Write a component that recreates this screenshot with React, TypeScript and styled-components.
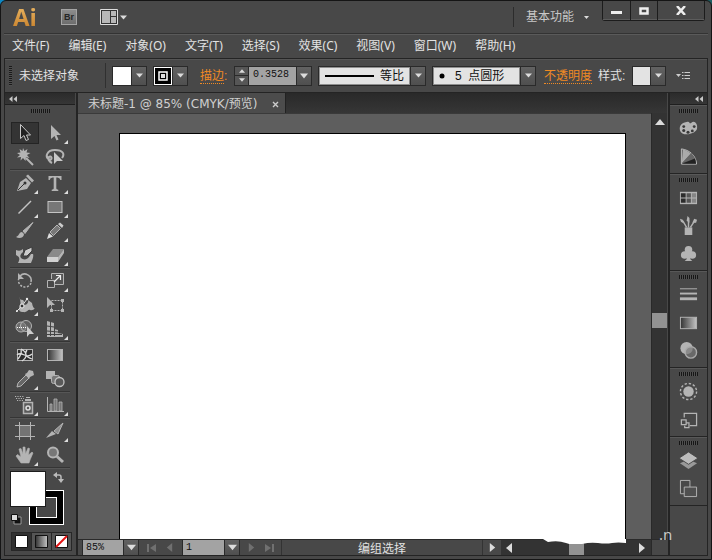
import React, { useState } from "react";
import styled, { createGlobalStyle, css } from "styled-components";

const c = {
  panel: "#484848",
  edge: "#242424",
  dark: "#333333",
  icon: "#b4b4b4",
  text: "#e2e2e2",
  orange: "#f08a24",
};

const Global = createGlobalStyle`
  * { box-sizing: border-box; }
  html, body { margin: 0; height: 100%; }
  body {
    background: linear-gradient(90deg, #0d87c4 0 10px, #1d5f63 10px);
    color: ${c.text};
    font: 12px/16px "Noto Sans", "Noto Sans CJK SC", sans-serif;
    overflow: hidden;
  }
  button, input, select {
    font: inherit; color: inherit; margin: 0; padding: 0; border: 0; border-radius: 0; background: none;
  }
  input, select { min-width: 0; outline: none; }
  svg { display: block; flex: none; }
`;

const Window = styled.div`
  height: 100vh;
  display: flex;
  flex-direction: column;
  background: ${c.panel};
  border: 1px solid #151515;
  border-radius: 6px 6px 0 0;
  padding: 0 3px 3px;
`;

/* Title bar */
const TitleBar = styled.header`
  height: 32px;
  flex: none;
  display: flex;
  align-items: center;
  padding-left: 9px;
`;
const Logo = styled.span`
  width: 48px;
  font: bold 24px/24px "Liberation Sans Narrow", "Open Sans", sans-serif;
  background: linear-gradient(#eab765, #c8812b);
  background-clip: text;
  color: transparent;
`;
const Bridge = styled.button`
  width: 16px;
  height: 16px;
  background: linear-gradient(#8c8c8c, #6d6d6d);
  border: 1px solid #a4a4a4;
  color: #262626;
  font: bold 9px/12px "Liberation Sans", sans-serif;
  margin-right: 23px;
`;
const PlainButton = styled.button`
  display: flex;
  align-items: center;
  gap: 2px;
`;
const Workspace = styled.button`
  display: flex;
  align-items: center;
  gap: 10px;
  height: 20px;
  margin-left: auto;
  margin-right: 13px;
  padding-left: 12px;
  border-left: 1px solid #2c2c2c;
  color: #c8c8c8;
`;
const WindowButtons = styled.div`
  align-self: flex-start;
  display: flex;
  height: 20px;
  margin-right: 3px;
  border: 1px solid #1c1c1c;
  border-top: 0;
  border-radius: 0 0 3px 3px;
`;
const WindowButton = styled.button<{ $wide?: boolean }>`
  width: ${(p) => (p.$wide ? 47 : 27)}px;
  display: grid;
  place-items: center;
  box-shadow: inset 0 -1px #5c5c5c;
  & + & { border-left: 1px solid #1c1c1c; }
`;

/* Menu bar */
const MenuBar = styled.nav`
  height: 25px;
  flex: none;
  display: flex;
  align-items: center;
  gap: 19px;
  padding-left: 8px;
  border-top: 1px solid #333;
  box-shadow: inset 0 1px #5a5a5a;
`;
const MenuItem = styled.button`
  white-space: nowrap;
  line-height: 20px;
`;

/* Control bar */
const ControlBar = styled.section`
  height: 35px;
  flex: none;
  display: flex;
  align-items: center;
  gap: 6px;
  padding-left: 4px;
  border: 1px solid ${c.edge};
  box-shadow: inset 0 1px #555;
  font-family: "Liberation Sans", "Noto Sans CJK SC", sans-serif;
`;
const SideGrip = styled.span`
  width: 4px;
  height: 20px;
  border-right: 1px solid ${c.panel};
  background: repeating-linear-gradient(#1a1a1a 0 1px, #505050 1px 2px);
`;
const Label = styled.span<{ $w: number }>`
  width: ${(p) => p.$w}px;
  white-space: nowrap;
`;
const Divider = styled.span`
  width: 1px;
  height: 25px;
  background: #303030;
`;
const Links = styled.span<{ $w: number; $pad: number }>`
  width: ${(p) => p.$w}px;
  padding-left: ${(p) => p.$pad}px;
  color: ${c.orange};
  white-space: nowrap;
  a { color: inherit; text-decoration: none; border-bottom: 1px dotted ${c.orange}; }
`;
const Combo = styled.div<{ $w: number }>`
  width: ${(p) => p.$w}px;
  height: 20px;
  display: flex;
  align-items: stretch;
  border: 1px solid #2a2a2a;
  background: #565656;
`;
const Swatch = styled.span<{ $tone: string }>`
  flex: 1;
  display: grid;
  place-items: center;
  border: 1px solid ${(p) => (p.$tone === "#000" ? "#fff" : p.$tone)};
  background: ${(p) => p.$tone};
`;
const Arrow = styled.button`
  width: 15px;
  flex: none;
  display: grid;
  place-items: center;
  border-left: 1px solid #2a2a2a;
  background: linear-gradient(#626262, #4f4f4f);
`;
const ArrowMark = styled(Arrow).attrs({ as: "span" })``;
const Spinner = styled.div`
  width: 14px;
  display: flex;
  flex-direction: column;
  border-right: 1px solid #2a2a2a;
  button { flex: 1; display: grid; place-items: center; }
  button + button { border-top: 1px solid #2a2a2a; }
`;
const NumberInput = styled.input`
  flex: 1;
  width: 0;
  background: #a3a3a3;
  color: #111;
  padding: 0 0 2px 4px;
  font: 10px/16px "Liberation Mono", monospace;
`;
const Face = styled.label`
  flex: 1;
  display: flex;
  align-items: center;
  border: 1px solid #8e8e8e;
  background: #e3e3e3;
  color: #111;
  padding-left: 5px;
`;
const Select = styled.select<{ $pad: number }>`
  appearance: none;
  flex: 1;
  height: 16px;
  padding-left: ${(p) => p.$pad}px;
  white-space: pre;
`;

/* Workspace columns */
const Body = styled.div`
  flex: 1;
  min-height: 0;
  display: flex;
  border: 1px solid ${c.edge};
  border-top: 0;
`;
const Column = styled.aside<{ $w: number }>`
  width: ${(p) => p.$w}px;
  flex: none;
  display: flex;
  flex-direction: column;
`;
const ColumnHead = styled.button<{ $right?: boolean }>`
  height: 12px;
  flex: none;
  display: flex;
  align-items: center;
  justify-content: ${(p) => (p.$right ? "flex-end" : "flex-start")};
  padding: 0 4px;
  background: linear-gradient(#2b2b2b, #363636);
  border-bottom: 1px solid #1f1f1f;
`;
const Grip = styled.span`
  display: block;
  flex: none;
  width: 19px;
  height: 4px;
  margin: 4px auto 0;
  background: repeating-linear-gradient(90deg, #161616 0 1px, #505050 1px 2px);
`;
const ToolGroups = styled.div`
  padding: 8px 5px 0;
`;
const ToolGroup = styled.div`
  display: grid;
  grid-template-columns: 30px 30px;
  grid-auto-rows: 24px;
  border-bottom: 1px solid #353535;
  box-shadow: 0 1px #565656;
  margin-bottom: 1px;
`;
const Tool = styled.button<{ $on: boolean }>`
  position: relative;
  display: grid;
  place-items: center;
  margin: 1px;
  ${(p) => p.$on && css`background: #343434; box-shadow: inset 0 0 0 1px #242424;`}
`;
const Flyout = styled.i`
  position: absolute;
  right: 1px;
  bottom: 0;
  border: 2px solid transparent;
  border-right-color: #ddd;
  border-bottom-color: #ddd;
`;
const Paint = styled.div`
  position: relative;
  height: 63px;
  margin: 0 5px;
`;
const FillSwatch = styled.button`
  position: absolute;
  left: 0;
  top: 2px;
  width: 36px;
  height: 36px;
  background: #fff;
  border: 1px solid #1d1d1d;
`;
const StrokeSwatch = styled.button`
  position: absolute;
  left: 19px;
  top: 21px;
  width: 35px;
  height: 35px;
  border: 1px solid #fff;
  background: #000;
  display: grid;
  place-items: center;
  &::after { content: ""; width: 19px; height: 19px; border: 1px solid #fff; background: ${c.panel}; }
`;
const PaintAction = styled.button<{ $x: number; $y: number }>`
  position: absolute;
  left: ${(p) => p.$x}px;
  top: ${(p) => p.$y}px;
`;
const PaintModes = styled.div`
  display: flex;
  width: 61px;
  height: 19px;
  margin-left: 6px;
  border: 1px solid #272727;
`;
const PaintMode = styled.button<{ $on?: boolean }>`
  flex: 1;
  display: grid;
  place-items: center;
  background: ${(p) => (p.$on ? "#303030" : "#555")};
  & + & { border-left: 1px solid #272727; }
`;
const Center = styled.main`
  flex: 1;
  min-width: 0;
  display: flex;
  flex-direction: column;
  margin: 0 1px;
  border-left: 2px solid ${c.edge};
`;
const Tabs = styled.div`
  height: 20px;
  flex: none;
  display: flex;
  background: linear-gradient(#292929, #363636);
`;
const Tab = styled.div`
  width: 208px;
  display: flex;
  align-items: center;
  justify-content: space-between;
  padding: 2px 6px 0 10px;
  background: #4c4c4c;
  border-right: 1px solid #222;
  color: #d0d0d0;
  font-family: "DejaVu Sans", "Noto Sans CJK SC", sans-serif;
  white-space: nowrap;
`;
const View = styled.div`
  flex: 1;
  min-height: 0;
  display: flex;
`;
const Canvas = styled.div`
  flex: 1;
  background: #5e5e5e;
  border-top: 1px solid #3a3a3a;
  padding: 19px 25px 0 41px;
  display: flex;
`;
const Artboard = styled.div`
  flex: 1;
  background: #fff;
  border: 1px solid #000;
  border-bottom: 0;
`;
const VScroll = styled.div`
  width: 16px;
  flex: none;
  display: flex;
  flex-direction: column;
  align-items: center;
  padding-top: 4px;
  background: ${c.dark};
  border-left: 1px solid #292929;
`;
const Space = styled.span<{ $grow: number }>`
  flex: ${(p) => p.$grow};
`;
const Thumb = styled.span`
  width: 15px;
  height: 15px;
  background: #929292;
  flex: none;
`;
const StatusBar = styled.footer`
  height: 16px;
  flex: none;
  display: flex;
  align-items: stretch;
  border-top: 1px solid #2a2a2a;
  padding-left: 4px;
  font-family: "Liberation Sans", "Noto Sans CJK SC", sans-serif;
`;
const StatusField = styled(Combo)`
  height: 15px;
  flex: none;
  border-width: 0 1px;
  input { padding: 0 0 0 3px; height: 15px; }
`;
const NavPair = styled.div<{ $w: number }>`
  width: ${(p) => p.$w}px;
  flex: none;
  display: flex;
  align-items: center;
  justify-content: center;
  gap: 9px;
`;
const StatusText = styled.div`
  flex: 1;
  border-left: 1px solid #333;
  text-align: center;
  line-height: 18px;
`;
const StatusMore = styled.button`
  width: 19px;
  display: grid;
  place-items: center;
  border-left: 1px solid #333;
`;
const HScroll = styled.div`
  position: relative;
  width: 150px;
  display: flex;
  align-items: center;
  padding: 0 4px 0 3px;
  background: ${c.dark};
`;
const Corner = styled.span`
  width: 16px;
  border-left: 1px solid #292929;
`;
const Tear = styled.svg`
  position: absolute;
  left: 42px;
  top: -1px;
`;
const Mark = styled.span`
  position: absolute;
  left: 158px;
  top: -14px;
  color: #c9c9c9;
  font: 15px/16px "Noto Sans", sans-serif;
`;
const Dock = styled(Column)`
  border-left: 2px solid ${c.edge};
`;
const DockGroup = styled.div`
  border-bottom: 1px solid ${c.edge};
  box-shadow: inset 0 1px #585858;
  padding: 0 0 3px;
`;
const DockButton = styled.button`
  width: 100%;
  height: 28px;
  display: grid;
  place-items: center;
  ${Grip} + & { margin-top: 1px; }
`;

const Tri = ({ d = "down", s = 7, f = "#dcdcdc" }: { d?: string; s?: number; f?: string }) => {
  const pts: Record<string, string> = {
    down: "0,2 10,2 5,8", up: "0,8 10,8 5,2", left: "8,0 8,10 2,5", right: "2,0 2,10 8,5",
  };
  return <svg width={s} height={s} viewBox="0 0 10 10"><polygon points={pts[d]} fill={f} /></svg>;
};

const Chevrons = () => (
  <svg width="8" height="6" viewBox="0 0 8 6" fill="#c8c8c8"><path d="M3.500 0v6L0 3zM8 0v6L4.500 3z" /></svg>
);

const I = c.icon;
const toolArt: Record<string, React.ReactNode> = {
  select: <path d="M5.500 1.500v14l3.500-3 2 5 2.500-1-2-4.500h4z" fill="#222" stroke="#c8c8c8" />,
  direct: <path d="M6 2v14l3.500-3 2 4.500 2-1-2-4.500h4.500z" fill={I} />,
  wand: <><path d="M8 1l1.500 3 3-2-1 3.500 4 .5-3.500 2 2.500 3-3.500-1-.5 4-2.500-3-2.500 2.500.5-3.500-4 .5 3-2.500-3-2 3.500-.5-1-3.500 3 2z" fill={I} /><path d="M11 11l7 7" stroke={I} strokeWidth="2" /></>,
  lasso: <><path d="M5 13C-1 10 2 3 10 3s10 4 7 8M5 13c3-1 1-5-1-3s1 5 3 6" fill="none" stroke={I} strokeWidth="2" /><path d="M9 5v12l3-3h6z" fill="#c8c8c8" /></>,
  pen: <><path d="M2 18l3-9 6-4 5 5-4 6z" fill={I} /><path d="M11 3l2-1.500 6 6-2 2z" fill={I} /><path d="M3 17l6-6" stroke="#333" /><circle cx="10" cy="10" r="1.500" fill="#333" /></>,
  type: <path d="M3.500 3h13v4h-1.200q-.3-2.500-3-2.500h-1v11q0 1 2 1.200V18H6.700v-1.300q2-.2 2-1.200v-11h-1q-2.700 0-3 2.500H3.500z" fill={I} />,
  line: <path d="M3.500 16.500L16 4" stroke="#c4c4c4" strokeWidth="1.500" />,
  rect: <rect x="3" y="4.500" width="14" height="11" fill="#777" stroke="#c4c4c4" />,
  brush: <><path d="M18 1.500L8 10l2 2.500z" fill={I} stroke={I} /><path d="M7 11c-3 0-2 3-6 5 3 2 8 1 8-3z" fill={I} /></>,
  pencil: <><path d="M2 18l2-6 4 3.500z" fill="#ddd" /><path d="M5 11l7-7 3.500 3.500-7 7z" fill="#777" stroke={I} /><path d="M13 3l2-1.500 3.500 3L17 7z" fill="#ccc" /></>,
  blob: <><path d="M1 5q4 2 7-1v3q-4 3-2 6c2 2 6 2 8-1l2-3h2c1 3-1 6-2 9H3c2-4 2-6-2-8z" fill={I} /><path d="M8 11l2-6 7-3v4l-5 5z" fill="#ccc" stroke="#3a3a3a" /></>,
  eraser: <><path d="M2 12l6-8h11l-6 8z" fill="#8a8a8a" /><path d="M2 12h11v5H2z" fill="#d1d1d1" /><path d="M13 12l6-8v4l-6 9z" fill={I} /></>,
  rotate: <><path d="M5 5a6.500 6.500 0 0 1 11 6" fill="none" stroke={I} strokeWidth="1.500" /><path d="M16 12a6.500 6.500 0 1 1-12-5" fill="none" stroke={I} strokeWidth="1.500" strokeDasharray="2 1.500" /><path d="M3 2v6h6z" fill={I} /></>,
  scale: <><path d="M6.500 8V2.500h12v11H10" fill="#555" stroke={I} /><path d="M2.500 9.500h7v7h-7z" fill="none" stroke={I} /><path d="M9 11l6-6m-4-.5h4.500V9" fill="none" stroke="#eee" strokeWidth="1.200" /></>,
  width: <><path d="M4 2q0 3 4 3 2 2 0 4c2 2 6 0 5-4l4 3q1 6 3 5-2 3-5 2c-2-1-3 3-7 2-3 0-4-1-4-4q3-5 0-11z" fill={I} /><path d="M1 17l6-6 5-7" stroke="#ddd" fill="none" /><circle cx="7" cy="11" r="2" fill="#333" stroke="#eee" /><circle cx="2" cy="16" r="1" fill="#eee" /><circle cx="12" cy="4" r="1.200" fill="#eee" /></>,
  transform: <><path d="M2 2v11l3-3h5z" fill={I} /><rect x="6.500" y="5.500" width="11" height="10" fill="none" stroke={I} strokeDasharray="2 1" /><path d="M5 14h3v3H5zM16 4h3v3h-3zM16 14h3v3h-3z" fill={I} /></>,
  shape: <><circle cx="6" cy="8" r="5" fill="#6d6d6d" stroke={I} /><circle cx="11" cy="7" r="5.500" fill="#777" fillOpacity=".5" stroke={I} /><path d="M2 8.500h12" stroke="#fff" strokeDasharray="1 1" /><path d="M12 7v11l2.500-3H19z" fill="#ccc" /></>,
  perspective: <><path d="M2 2l7 2v6l4 1v3l5 1v3H2z" fill={I} /><path d="M5.500 2v15M2 7l7 1M2 12l11 1M2 15.500h15M9.500 8v9" stroke="#444" fill="none" /></>,
  mesh: <><rect x="2.500" y="4.500" width="15" height="11" fill="#2e2e2e" stroke={I} /><path d="M6 4c6 3 7 8 1 12M2 10c5-5 9 5 15-1M3 14c3-4 4-6 3-9M17 14c-6-2-8-5-5-9" stroke="#ddd" fill="none" strokeWidth="1.300" /></>,
  gradient: <rect x="2.500" y="4.500" width="15" height="11" fill="url(#lr)" stroke={I} />,
  dropper: <><path d="M2 18l1-4 8-8 3 3-8 8z" fill="#666" stroke={I} /><path d="M10 5l2-1 2-3 4 1 1 4-4 2-1 2z" fill={I} /></>,
  blend: <><path d="M1 2h9v8H1z" fill={I} /><rect x="6.500" y="6.500" width="8" height="8" rx="2" fill="#777" stroke={I} /><circle cx="14.500" cy="13" r="4.500" fill="#5a5a5a" stroke="#c4c4c4" strokeWidth="1.300" /></>,
  spray: <><path d="M8.500 7.500h9v11h-9z" fill="#5b5b5b" stroke={I} strokeWidth="1.500" /><circle cx="13" cy="13" r="2" fill="none" stroke="#ddd" strokeWidth="1.500" /><path d="M10 6h6V4h-6zM11 2h4v1h-4z" fill={I} /><path d="M0 1.500h9M1 3.500h8M2 5.500h6" stroke={I} strokeDasharray="1.200 1.200" /></>,
  graph: <><path d="M2.500 2v14.500H19" fill="none" stroke={I} /><path d="M5 9h2v7H5zM9 4h3v12H9zM14 7h3v9h-3z" fill="#777" stroke={I} strokeWidth=".8" /></>,
  artboard: <><rect x="5" y="5" width="10" height="10" fill="#737373" /><path d="M4.500 1v18M15.500 1v18M0 4.500h20M0 15.500h20" stroke={I} /></>,
  slice: <><path d="M1 17l6-7 4 3z" fill={I} /><path d="M9 10l9-8-5 11z" fill="#8d8d8d" stroke={I} /></>,
  hand: <path d="M6 18l-5-7 1.500-1.500L6 12 4 4l2-.5L8 9V2h2l.5 7L13 3l1.500.5-1 6.500L17 7l1 1-3 7-1 3z" fill={I} stroke={I} strokeWidth=".6" />,
  zoom: <><circle cx="8" cy="7.500" r="5" fill="#777" stroke={I} strokeWidth="2" /><path d="M12 11.500l6 5.500" stroke={I} strokeWidth="3" /></>,
};

const toolGroups: { id: string; name: string; fly?: boolean }[][] = [
  [{ id: "select", name: "选择" }, { id: "direct", name: "直接选择", fly: true }, { id: "wand", name: "魔棒" }, { id: "lasso", name: "套索" }],
  [{ id: "pen", name: "钢笔", fly: true }, { id: "type", name: "文字", fly: true }, { id: "line", name: "直线段", fly: true }, { id: "rect", name: "矩形", fly: true },
    { id: "brush", name: "画笔" }, { id: "pencil", name: "铅笔", fly: true }, { id: "blob", name: "斑点画笔" }, { id: "eraser", name: "橡皮擦", fly: true }],
  [{ id: "rotate", name: "旋转", fly: true }, { id: "scale", name: "比例缩放", fly: true }, { id: "width", name: "宽度", fly: true }, { id: "transform", name: "自由变换" },
    { id: "shape", name: "形状生成器", fly: true }, { id: "perspective", name: "透视网格", fly: true }],
  [{ id: "mesh", name: "网格" }, { id: "gradient", name: "渐变" }, { id: "dropper", name: "吸管", fly: true }, { id: "blend", name: "混合" }],
  [{ id: "spray", name: "符号喷枪", fly: true }, { id: "graph", name: "柱形图", fly: true }],
  [{ id: "artboard", name: "画板" }, { id: "slice", name: "切片", fly: true }, { id: "hand", name: "抓手", fly: true }, { id: "zoom", name: "缩放" }],
];

const dockArt: { name: string; art: React.ReactNode }[][] = [
  [
    { name: "颜色", art: <><path d="M9 3c2-1 2 3 4 1 3-3 7 1 6 6-1 6-16 9-18 2C0 7 3 4 9 3z" fill={I} /><g fill="#383838"><circle cx="5" cy="8" r="1.500" /><circle cx="5" cy="12" r="1.600" /><circle cx="9.500" cy="14" r="1.600" /><circle cx="14" cy="12.500" r="1.500" /><circle cx="16" cy="8" r="1.500" /></g></> },
    { name: "颜色参考", art: <><path d="M2.500 2v16h16C18 9 11 3 2.500 2z" fill="#555" stroke="#c0c0c0" /><path d="M3 17L4 3c3 0 6 2 9 4z" fill="#aaa" /><path d="M3 17L13 6l4 6z" fill="#666" /><path d="M3 17.500L17 12l1 5.500z" fill="#222" /></> },
  ],
  [
    { name: "色板", art: <><rect x="1" y="4" width="18" height="13" fill={I} /><path d="M2 5.500h5v4.500H2zM2 11h5v4.500H2z" fill="#2c2c2c" /><path d="M8 5.500h4.500v4.500H8zM8 11h4.500v4.500H8z" fill="#555" /><path d="M13.500 5.500H18v4.500h-4.500zM13.500 11H18v4.500h-4.500z" fill="#858585" /></> },
    { name: "画笔", art: <><path d="M6 12h8v8H6z" fill={I} /><path d="M8 12L4 5M10 12V4M12 12l4-6" stroke={I} strokeWidth="1.500" /><path d="M1 3l3 1 1 4-3-2zM9 0l2 2 0 5-3-2zM14 7l2-4 3 1-1 3z" fill={I} /></> },
    { name: "符号", art: <><circle cx="10" cy="6" r="4" fill={I} /><circle cx="6" cy="11.500" r="4" fill={I} /><circle cx="14" cy="11.500" r="4" fill={I} /><path d="M9 9h2l1 7 2 2H6l2-2z" fill={I} /></> },
  ],
  [
    { name: "描边", art: <><path d="M1 4h18" stroke={I} /><path d="M1 9h18" stroke={I} strokeWidth="2" /><path d="M1 14.500h18" stroke={I} strokeWidth="3" /></> },
    { name: "渐变", art: <rect x="1.500" y="4.500" width="17" height="12" fill="url(#lr)" stroke={I} /> },
    { name: "透明度", art: <><circle cx="8" cy="7.500" r="6.500" fill={I} /><circle cx="12.500" cy="12" r="6" fill="#777" fillOpacity=".7" stroke="#aaa" strokeWidth="1.500" /></> },
  ],
  [
    { name: "外观", art: <><circle cx="10" cy="10" r="5.500" fill={I} /><circle cx="10" cy="10" r="8.500" fill="none" stroke={I} strokeWidth="1.500" strokeDasharray="2.500 1.950" /></> },
    { name: "图形样式", art: <path d="M5.500 8V3.500h13v13h-7M2.500 10.500h5v5h-5zM7 13.500h3.500v5H6v-2" fill="none" stroke={I} strokeWidth="1.300" /> },
  ],
  [
    { name: "图层", art: <><path d="M1 13l9-4 9 4-9 6z" fill="#999" /><path d="M0 7.500L10 1l10 6.500L10 14z" fill="#bcbcbc" stroke="#484848" /></> },
    { name: "画板", art: <><path d="M1.500 1.500h10v14h-10z" fill="none" stroke={I} /><path d="M5.500 8.500h13v10h-13z" fill="#505050" stroke={I} /></> },
  ],
];

const menus = ["文件(F)", "编辑(E)", "对象(O)", "文字(T)", "选择(S)", "效果(C)", "视图(V)", "窗口(W)", "帮助(H)"];

export default function App() {
  const [tool, setTool] = useState("select");
  return (
    <Window>
      <Global />
      <svg width="0" height="0" aria-hidden="true">
        <defs><linearGradient id="lr"><stop stopColor="#333" /><stop offset="1" stopColor="#c4c4c4" /></linearGradient></defs>
      </svg>
      <TitleBar>
        <Logo>Ai</Logo>
        <Bridge>Br</Bridge>
        <PlainButton aria-label="排列文档">
          <svg width="18" height="16" viewBox="0 0 18 16"><path d="M.5.500h17v15H.5z" fill="#333" stroke="#ddd" /><path d="M2 2h8v12H2zM11 2h5v5h-5zM11 8h5v6h-5z" fill="#b8b8b8" /></svg>
          <Tri />
        </PlainButton>
        <Workspace>基本功能<Tri s={5} /></Workspace>
        <WindowButtons>
          <WindowButton aria-label="最小化"><svg width="11" height="8"><path d="M0 4h11v3H0z" fill="#eee" /></svg></WindowButton>
          <WindowButton aria-label="最大化"><svg width="10" height="8"><path d="M1.500 1.500h7v5h-7z" fill="none" stroke="#eee" strokeWidth="2.500" /></svg></WindowButton>
          <WindowButton $wide aria-label="关闭"><svg width="10" height="9"><path d="M1 0l8 9M9 0L1 9" stroke="#eee" strokeWidth="2.500" /></svg></WindowButton>
        </WindowButtons>
      </TitleBar>
      <MenuBar>{menus.map((m) => <MenuItem key={m}>{m}</MenuItem>)}</MenuBar>
      <ControlBar>
        <SideGrip />
        <Label $w={80}>未选择对象</Label>
        <Divider />
        <Combo $w={35}><Swatch $tone="#fff" /><Arrow aria-label="填色"><Tri /></Arrow></Combo>
        <Combo $w={35}>
          <Swatch $tone="#000"><svg width="10" height="10"><path d="M1 1h8v8H1z" fill="none" stroke="#fff" strokeWidth="1.500" /><path d="M3 3h4v4H3z" fill="#ddd" /></svg></Swatch>
          <Arrow aria-label="描边颜色"><Tri /></Arrow>
        </Combo>
        <Links $w={34} $pad={6}><a href="#stroke">描边</a>:</Links>
        <Combo $w={78}>
          <Spinner>
            <button aria-label="增加"><Tri d="up" s={6} /></button>
            <button aria-label="减少"><Tri s={6} /></button>
          </Spinner>
          <NumberInput aria-label="描边粗细" defaultValue="0.3528" />
          <Arrow aria-label="粗细列表"><Tri s={8} /></Arrow>
        </Combo>
        <Combo $w={108}>
          <Face>
            <svg width="49" height="2"><path d="M0 1h49" stroke="#000" strokeWidth="2" /></svg>
            <Select $pad={6} aria-label="宽度配置"><option>等比</option></Select>
          </Face>
          <ArrowMark><Tri /></ArrowMark>
        </Combo>
        <Combo $w={104}>
          <Face>
            <svg width="6" height="6"><circle cx="3" cy="3" r="2.500" fill="#000" /></svg>
            <Select $pad={10} aria-label="画笔定义"><option>5&nbsp; 点圆形</option></Select>
          </Face>
          <ArrowMark><Tri /></ArrowMark>
        </Combo>
        <Links $w={50} $pad={2}><a href="#opacity">不透明度</a></Links>
        <Label $w={28}>样式:</Label>
        <Combo $w={34}><Swatch $tone="#e3e3e3" /><Arrow aria-label="样式列表"><Tri /></Arrow></Combo>
        <PlainButton aria-label="面板菜单">
          <svg width="20" height="10"><path d="M4 3h5L6.500 6z" fill="#ccc" /><path d="M10 1.500h1.500m1 0H18M10 4.500h1.500m1 0H18M10 7.500h1.500m1 0H18" stroke="#ccc" /></svg>
        </PlainButton>
      </ControlBar>
      <Body>
        <Column $w={70}>
          <ColumnHead aria-label="折叠工具"><Chevrons /></ColumnHead>
          <Grip />
          <ToolGroups>
            {toolGroups.map((g, n) => (
              <ToolGroup key={n}>
                {g.map((t) => (
                  <Tool key={t.id} $on={t.id === tool} aria-label={t.name} onClick={() => setTool(t.id)}>
                    <svg width="20" height="20" viewBox="0 0 20 20">{toolArt[t.id]}</svg>
                    {t.fly && <Flyout />}
                  </Tool>
                ))}
              </ToolGroup>
            ))}
          </ToolGroups>
          <Paint>
            <StrokeSwatch aria-label="描边" />
            <FillSwatch aria-label="填色" />
            <PaintAction $x={43} $y={3} aria-label="互换填色和描边">
              <svg width="11" height="11"><path d="M3 3h3q2 0 2 2v3" fill="none" stroke="#bbb" strokeWidth="1.500" /><path d="M0 3l4-3v6zM5 7h6l-3 4z" fill="#bbb" /></svg>
            </PaintAction>
            <PaintAction $x={0} $y={44} aria-label="默认填色和描边">
              <svg width="12" height="12"><path d="M4 4h7v7H4z" fill="#111" stroke="#999" /><path d="M1.500 1.500h6v6h-6z" fill="#ddd" stroke="#111" /></svg>
            </PaintAction>
          </Paint>
          <PaintModes>
            <PaintMode $on aria-label="颜色"><svg width="13" height="13"><path d="M.5.500h12v12H.5z" fill="#fff" stroke="#111" /></svg></PaintMode>
            <PaintMode aria-label="渐变"><svg width="13" height="13"><path d="M.5.500h12v12H.5z" fill="url(#lr)" stroke="#111" /></svg></PaintMode>
            <PaintMode aria-label="无"><svg width="13" height="13"><path d="M.5.500h12v12H.5z" fill="#fff" stroke="#111" /><path d="M1 12L12 1" stroke="#e51616" strokeWidth="2" /></svg></PaintMode>
          </PaintModes>
        </Column>
        <Center>
          <Tabs>
            <Tab>未标题-1 @ 85% (CMYK/预览)
              <PlainButton aria-label="关闭文档"><svg width="7" height="7"><path d="M1 1l5 5M6 1L1 6" stroke="#ccc" strokeWidth="1.400" /></svg></PlainButton>
            </Tab>
          </Tabs>
          <View>
            <Canvas><Artboard /></Canvas>
            <VScroll><Tri d="up" s={10} /><Space $grow={186} /><Thumb /><Space $grow={210} /></VScroll>
          </View>
          <StatusBar>
            <StatusField $w={57}><NumberInput aria-label="缩放比例" defaultValue="85%" /><Arrow aria-label="缩放列表"><Tri s={9} /></Arrow></StatusField>
            <NavPair $w={43}>
              <PlainButton aria-label="首个画板"><svg width="9" height="8" fill="#707070"><path d="M0 0h2v8H0zM9 0v8L3 4z" /></svg></PlainButton>
              <PlainButton aria-label="上一画板"><Tri d="left" s={9} f="#707070" /></PlainButton>
            </NavPair>
            <StatusField $w={58}><NumberInput aria-label="画板" defaultValue="1" /><Arrow aria-label="画板列表"><Tri s={9} /></Arrow></StatusField>
            <NavPair $w={41}>
              <PlainButton aria-label="下一画板"><Tri d="right" s={9} f="#707070" /></PlainButton>
              <PlainButton aria-label="末个画板"><svg width="9" height="8" fill="#707070"><path d="M7 0h2v8H7zM0 0v8l6-4z" /></svg></PlainButton>
            </NavPair>
            <StatusText>编组选择</StatusText>
            <StatusMore aria-label="状态选项"><Tri d="right" s={9} /></StatusMore>
            <HScroll>
              <Tri d="left" s={10} /><Space $grow={54} /><Thumb /><Space $grow={53} /><Tri d="right" s={10} />
              <Tear width="83" height="5" viewBox="0 0 83 5"><path d="M0 0h83v4q-8-1-14 0t-14 0-16 1-16-1T5 3z" fill="#fff" /></Tear>
              <Mark>.n</Mark>
            </HScroll>
            <Corner />
          </StatusBar>
        </Center>
        <Dock $w={39}>
          <ColumnHead $right aria-label="展开面板"><Chevrons /></ColumnHead>
          {dockArt.map((g, n) => (
            <DockGroup key={n}>
              <Grip />
              {g.map((d) => (
                <DockButton key={d.name} aria-label={d.name}><svg width="19" height="19" viewBox="0 0 20 20">{d.art}</svg></DockButton>
              ))}
            </DockGroup>
          ))}
        </Dock>
      </Body>
    </Window>
  );
}
